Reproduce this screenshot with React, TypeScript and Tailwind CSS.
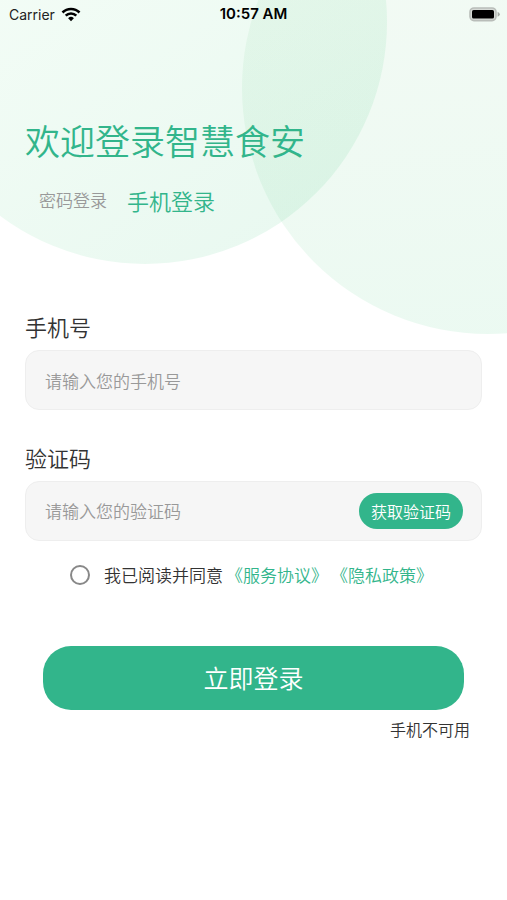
import { useState } from "react";

function WifiIcon() {
  return (
    <svg viewBox="0 0 20 15" className="h-[15px] w-5" aria-hidden="true">
      <path d="M10 14.2 L12.9 11.3 A4.1 4.1 0 0 0 7.1 11.3 Z" fill="#000" />
      <path d="M4.7 8.7 A7.5 7.5 0 0 1 15.3 8.7" fill="none" stroke="#000" strokeWidth="2.6" />
      <path d="M1.5 5.5 A12 12 0 0 1 18.5 5.5" fill="none" stroke="#000" strokeWidth="2.6" />
    </svg>
  );
}

function BatteryIcon() {
  return (
    <svg viewBox="0 0 31 15" className="h-[15px] w-[31px]" aria-hidden="true">
      <rect x="1" y="1" width="26" height="12.6" rx="4" fill="#d6dad6" stroke="#b9bdb9" strokeWidth="1.6" />
      <rect x="3" y="3" width="22" height="8.6" rx="1.6" fill="#000" />
      <path d="M28.6 4.8 Q30.8 5.8 30.8 7.3 Q30.8 8.8 28.6 9.8 Z" fill="#a5aaa5" />
    </svg>
  );
}

function Background() {
  return (
    <svg viewBox="0 0 507 340" className="absolute inset-x-0 top-0 w-full" aria-hidden="true">
      <defs>
        <linearGradient id="left" x1="0.3" y1="0.4" x2="0.7" y2="1">
          <stop offset="0" stopColor="#48d678" stopOpacity="0.07" />
          <stop offset="1" stopColor="#38c47a" stopOpacity="0.11" />
        </linearGradient>
        <linearGradient id="right" x1="0.5" y1="0" x2="0.6" y2="1">
          <stop offset="0" stopColor="#50b860" stopOpacity="0.06" />
          <stop offset="1" stopColor="#38c878" stopOpacity="0.1" />
        </linearGradient>
      </defs>
      <circle cx="145" cy="22" r="242" fill="url(#left)" />
      <circle cx="488" cy="88" r="246" fill="url(#right)" />
    </svg>
  );
}

export default function App() {
  const [tab, setTab] = useState("phone");
  const [phone, setPhone] = useState("");
  const [code, setCode] = useState("");
  const [agreed, setAgreed] = useState(false);

  const tabClass = (name: string) =>
    tab === name ? "text-[22px] leading-7 text-[#32b58b]" : "text-[17px] leading-7 text-[#999]";

  return (
    <div className="relative min-h-screen bg-white font-['Noto_Sans_CJK_SC',sans-serif] font-[350] text-[#333]">
      <Background />

      <div className="relative">
        {/* Status bar */}
        <header className="grid h-7 grid-cols-3 items-center px-[7px] font-[Inter,sans-serif] text-black">
          <div className="flex items-center gap-[6px] pl-[2px]">
            <span className="text-[14px] font-normal text-[#222]">Carrier</span>
            <WifiIcon />
          </div>
          <span className="text-center text-[15px] leading-5 font-semibold">10:57 AM</span>
          <div className="flex justify-end">
            <BatteryIcon />
          </div>
        </header>

        <main className="px-[25px] pt-[88px]">
          <h1 className="text-[35px] leading-[48px] font-[350] text-[#32b58b]">欢迎登录智慧食安</h1>

          <div className="mt-[22px] flex h-7 items-center gap-5 pl-[14px]">
            <button type="button" onClick={() => setTab("password")} className={tabClass("password")}>
              密码登录
            </button>
            <button type="button" onClick={() => setTab("phone")} className={tabClass("phone")}>
              手机登录
            </button>
          </div>

          <form className="mt-[98px]" onSubmit={(e) => e.preventDefault()}>
            <label htmlFor="phone" className="block text-[22px] leading-7">
              手机号
            </label>
            <input
              id="phone"
              type="tel"
              value={phone}
              onChange={(e) => setPhone(e.target.value)}
              placeholder="请输入您的手机号"
              className="mt-[10px] block h-[60px] w-full rounded-[14px] border border-[#eee] bg-[#f6f6f6] px-[19px] text-[17px] leading-6 outline-none placeholder:text-[#999]"
            />

            <label htmlFor="code" className="mt-[33px] block text-[22px] leading-7">
              验证码
            </label>
            <div className="mt-[10px] flex h-[60px] items-center rounded-[14px] border border-[#eee] bg-[#f6f6f6] pr-[18px] pl-[19px]">
              <input
                id="code"
                type="text"
                value={code}
                onChange={(e) => setCode(e.target.value)}
                placeholder="请输入您的验证码"
                className="min-w-0 flex-1 bg-transparent text-[17px] leading-6 outline-none placeholder:text-[#999]"
              />
              <button type="button" className="h-9 rounded-full bg-[#32b58b] px-3 text-[16px] text-white">
                获取验证码
              </button>
            </div>

            <div className="mt-[22px] flex h-6 items-center pl-[45px] text-[17px]">
              <input
                id="agree"
                type="checkbox"
                checked={agreed}
                onChange={(e) => setAgreed(e.target.checked)}
                className="size-5 shrink-0 appearance-none rounded-full border-2 border-[#888] checked:border-[#32b58b] checked:bg-[#32b58b]"
              />
              <div className="flex gap-[3px] pl-[14px]">
                <label htmlFor="agree">我已阅读并同意</label>
                <a href="#service" className="text-[#32b58b]">《服务协议》</a>
                <a href="#privacy" className="text-[#32b58b]">《隐私政策》</a>
              </div>
            </div>

            <div className="px-[18px] pt-[59px]">
              <button type="submit" className="h-16 w-full rounded-[28px] bg-[#32b58b] text-[25px] font-[350] text-white">
                立即登录
              </button>
            </div>
          </form>

          <div className="mt-[7px] flex justify-end pr-3">
            <a href="#unavailable" className="text-[16px] leading-6">手机不可用</a>
          </div>
        </main>
      </div>
    </div>
  );
}
